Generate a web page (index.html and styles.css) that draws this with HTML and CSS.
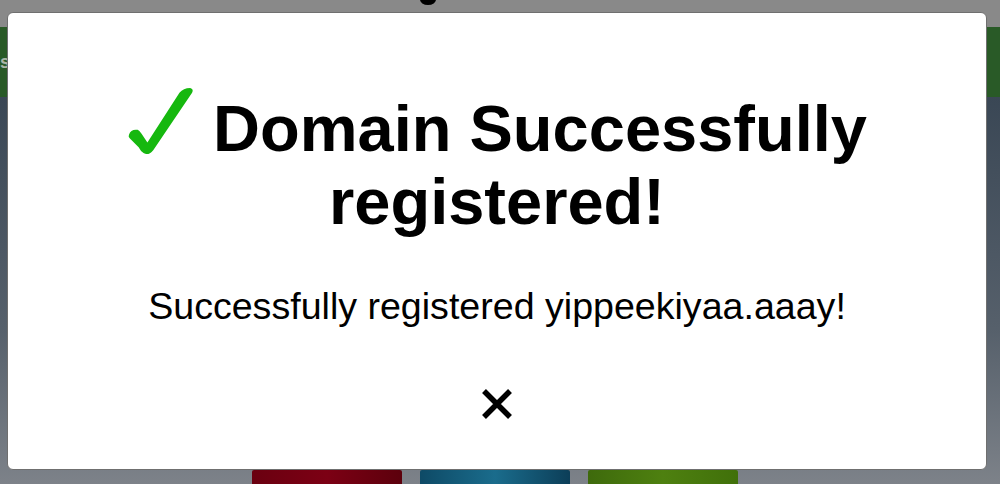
FILE: index.html
```html
<!DOCTYPE html>
<html lang="en">
<head>
<meta charset="utf-8">
<title>Domain registered</title>
<link rel="stylesheet" href="styles.css">
</head>
<body>
<div class="page">
  <div class="topbar"><span class="dot"></span></div>
  <div class="navbar"><span class="nav-text">s</span></div>
  <div class="hero">
    <div class="cups">
      <div class="cup cup-red"></div>
      <div class="cup cup-blue"></div>
      <div class="cup cup-green"></div>
    </div>
  </div>
</div>

<div class="modal" role="dialog">
  <h1 class="title"><svg class="check" viewBox="0 0 70 72" width="68" height="72" aria-hidden="true"><path d="M2 49 Q4 43 11 44 Q13 45 15 48 L21 57 L54 6 Q58 1 65 1 Q69 2 67 6 L27 65 Q22 71 17 68 Q14 66 12 62 L3 53 Q1 51 2 49 Z" fill="#16b80f"/></svg> Domain Successfully registered!</h1>
  <p class="message">Successfully registered yippeekiyaa.aaay!</p>
  <button class="close" type="button" aria-label="Close"><svg viewBox="0 0 32 32" width="32" height="32"><path d="M3 3 L29 29 M29 3 L3 29" stroke="#000" stroke-width="5.5" fill="none"/></svg></button>
</div>
</body>
</html>
```

FILE: styles.css
```css
* { box-sizing: border-box; }
html, body { margin: 0; padding: 0; }
body {
  width: 1000px;
  height: 484px;
  overflow: hidden;
  font-family: "Liberation Sans", Arial, sans-serif;
  background: #7c8188;
}
.page {
  display: flex;
  flex-direction: column;
  height: 484px;
}
.topbar {
  height: 27px;
  background: #898989;
  position: relative;
}
.dot {
  position: absolute;
  left: 420px;
  top: -6px;
  width: 16px;
  height: 11px;
  border-radius: 50%;
  background: #000;
}
.navbar {
  height: 70px;
  background: #295a27;
  color: #aab5a8;
  font-size: 18px;
  font-weight: bold;
  display: flex;
  align-items: center;
}
.nav-text { margin-left: 0; }
.hero {
  flex: 1;
  background: linear-gradient(180deg, #3a4755 0%, #56606b 60%, #7d8289 100%);
  display: flex;
  align-items: flex-end;
  justify-content: flex-start;
}
.cups {
  display: flex;
  gap: 18px;
  padding-left: 252px;
}
.cup {
  width: 150px;
  height: 14px;
  border-radius: 2px 2px 0 0;
}
.cup-red { background: linear-gradient(90deg, #6a0010, #7c0014 50%, #5c000c); }
.cup-blue { background: linear-gradient(90deg, #0e4a66, #1a6c8c 50%, #0c3e58); }
.cup-green { background: linear-gradient(90deg, #3e6a0c, #4e8010 50%, #40700a); }

.modal {
  position: fixed;
  left: 7px;
  top: 12px;
  width: 980px;
  height: 458px;
  background: #fff;
  border: 1px solid #6f6f6f;
  border-radius: 6px;
  display: flex;
  flex-direction: column;
  align-items: center;
  padding-top: 73px;
}
.title {
  margin: 0;
  max-width: 820px;
  font-size: 65px;
  line-height: 73px;
  font-weight: bold;
  text-align: center;
  color: #000;
}
.check {
  vertical-align: -7px;
}
.message {
  margin: 47px 0 0;
  font-size: 37.6px;
  line-height: 42px;
  color: #000;
}
.close {
  margin-top: 61px;
  padding: 0;
  border: 0;
  background: transparent;
  width: 32px;
  height: 32px;
  display: flex;
}
```
